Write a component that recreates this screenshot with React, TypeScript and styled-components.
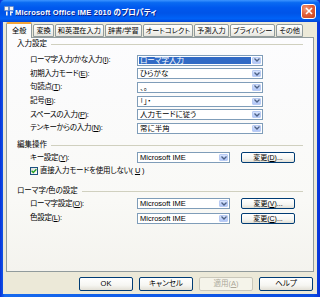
import React from 'react';
import styled, { createGlobalStyle } from 'styled-components';

const GlobalStyle = createGlobalStyle`
    html, body {
        margin: 0;
        padding: 0;
        width: 320px;
        height: 297px;
        overflow: hidden;
        background: #ffffff;
    }
    * {
        box-sizing: border-box;
    }
`;

const FONT = `"Liberation Sans", "Noto Sans CJK JP", sans-serif`;

const TABS = ['全般', '変換', '和英混在入力', '辞書/学習', 'オートコレクト', '予測入力', 'プライバシー', 'その他'];

interface InputRow {
    label: string;
    key: string;
    value: string;
    selected?: boolean;
}

const INPUT_ROWS: InputRow[] = [
    { label: 'ローマ字入力/かな入力', key: 'I', value: 'ローマ字入力', selected: true },
    { label: '初期入力モード', key: 'E', value: 'ひらがな' },
    { label: '句読点', key: 'T', value: '、。' },
    { label: '記号', key: 'B', value: '「」・' },
    { label: 'スペースの入力', key: 'P', value: '入力モードに従う' },
    { label: 'テンキーからの入力', key: 'N', value: '常に半角' },
];

const Mnemonic: React.FC<{ label: string; k: string; colon?: boolean }> = ({ label, k, colon = true }) => (
    <>
        {label}(<u>{k}</u>){colon ? ':' : ''}
    </>
);

const Chevron = () => (
    <svg width="6" height="4" viewBox="0 0 6 4">
        <path d="M0.5 0.5 L3 3 L5.5 0.5" fill="none" stroke="#4D6185" strokeWidth="1.3" />
    </svg>
);

const ComboBox: React.FC<{ width: number; value: string; selected?: boolean }> = ({ width, value, selected }) => (
    <Combo $w={width}>
        <ComboText $selected={selected}>{value}</ComboText>
        <DropButton>
            <Chevron />
        </DropButton>
    </Combo>
);

const App: React.FC = () => {
    return (
        <>
            <GlobalStyle />
            <Window>
                <TitleBar>
                    <AppIcon>
                        <svg width="10" height="10" viewBox="0 0 10 10">
                            <rect x="0.5" y="0.5" width="4" height="4" fill="#f4f4f4" stroke="#5d7fb8" strokeWidth="0.6" />
                            <rect x="5.5" y="0.5" width="4" height="4" fill="#f4f4f4" stroke="#5d7fb8" strokeWidth="0.6" />
                            <rect x="2" y="5.5" width="1.6" height="4" fill="#f4f4f4" />
                            <rect x="6" y="5.5" width="3" height="1.4" fill="#f4f4f4" />
                            <rect x="6" y="5.5" width="1.4" height="4" fill="#f4f4f4" />
                        </svg>
                    </AppIcon>
                    <TitleText>Microsoft Office IME 2010 のプロパティ</TitleText>
                    <CloseButton>
                        <svg width="8" height="8" viewBox="0 0 8 8">
                            <path d="M1 1 L7 7 M7 1 L1 7" stroke="#ffffff" strokeWidth="1.6" />
                        </svg>
                    </CloseButton>
                </TitleBar>
                <Body>
                    <TabStrip>
                        {TABS.map((tab, i) => (
                            <TabItem key={tab} $active={i === 0}>
                                {tab}
                            </TabItem>
                        ))}
                    </TabStrip>
                    <Panel>
                        <Section $top={1}>
                            <SectionHeader>
                                <span>入力設定</span>
                                <HeaderLine />
                            </SectionHeader>
                            <Rows $top={4.5}>
                                {INPUT_ROWS.map((row) => (
                                    <Row key={row.key}>
                                        <Label>
                                            <Mnemonic label={row.label} k={row.key} />
                                        </Label>
                                        <ComboBox width={126} value={row.value} selected={row.selected} />
                                    </Row>
                                ))}
                            </Rows>
                        </Section>

                        <Section $top={5}>
                            <SectionHeader>
                                <span>編集操作</span>
                                <HeaderLine />
                            </SectionHeader>
                            <Rows $top={1}>
                                <Row>
                                    <Label>
                                        <Mnemonic label="キー設定" k="Y" />
                                    </Label>
                                    <ComboBox width={93} value="Microsoft IME" />
                                    <SmallButton>
                                        <Mnemonic label="変更" k="D" colon={false} />...
                                    </SmallButton>
                                </Row>
                                <Row>
                                    <CheckLabel>
                                        <CheckBox>
                                            <svg width="6" height="6" viewBox="0 0 6 6">
                                                <path d="M0.6 2.8 L2.3 4.5 L5.4 1.2" fill="none" stroke="#21A121" strokeWidth="1.3" />
                                            </svg>
                                        </CheckBox>
                                        <Mnemonic label="直接入力モードを使用しない" k="U" colon={false} />
                                    </CheckLabel>
                                </Row>
                            </Rows>
                        </Section>

                        <Section $top={8}>
                            <SectionHeader>
                                <span>ローマ字/色の設定</span>
                                <HeaderLine />
                            </SectionHeader>
                            <Rows $top={0}>
                                <Row $h={14.8}>
                                    <Label>
                                        <Mnemonic label="ローマ字設定" k="O" />
                                    </Label>
                                    <ComboBox width={93} value="Microsoft IME" />
                                    <SmallButton>
                                        <Mnemonic label="変更" k="V" colon={false} />...
                                    </SmallButton>
                                </Row>
                                <Row $h={14.8}>
                                    <Label>
                                        <Mnemonic label="色設定" k="L" />
                                    </Label>
                                    <ComboBox width={93} value="Microsoft IME" />
                                    <SmallButton>
                                        <Mnemonic label="変更" k="C" colon={false} />...
                                    </SmallButton>
                                </Row>
                            </Rows>
                        </Section>
                    </Panel>
                    <Footer>
                        <DialogButton>OK</DialogButton>
                        <DialogButton>キャンセル</DialogButton>
                        <DialogButton disabled>
                            <Mnemonic label="適用" k="A" colon={false} />
                        </DialogButton>
                        <DialogButton>ヘルプ</DialogButton>
                    </Footer>
                </Body>
            </Window>
        </>
    );
};

export default App;

const Window = styled.div`
    width: 320px;
    height: 297px;
    display: flex;
    flex-direction: column;
    background: linear-gradient(90deg, #0831d9 0%, #166aee 1.5%, #0a4be0 98%, #0831d9 100%);
    padding: 0 3px 3px 3px;
    font-family: ${FONT};
    font-feature-settings: 'palt';
`;

const TitleBar = styled.div`
    height: 22px;
    margin: 0 -3px;
    padding: 0 4px 0 4px;
    display: flex;
    align-items: center;
    border-radius: 5px 5px 0 0;
    background: linear-gradient(
        180deg,
        #3d95ff 0%,
        #0a6af2 12%,
        #0058ee 35%,
        #0054e8 60%,
        #0062f7 85%,
        #0345d6 100%
    );
`;

const AppIcon = styled.div`
    width: 10px;
    height: 10px;
    margin-right: 1px;
    display: flex;
`;

const TitleText = styled.div`
    flex: 1;
    color: #ffffff;
    font-weight: 700;
    font-size: 7.5px;
    letter-spacing: 0.2px;
    text-shadow: 1px 1px 0 #0a1e8c;
    white-space: nowrap;
`;

const CloseButton = styled.div`
    width: 15px;
    height: 15px;
    border: 1px solid #ffffff;
    border-radius: 3px;
    background: radial-gradient(circle at 30% 30%, #f39a7a 0%, #e2613a 45%, #c4401a 100%);
    display: flex;
    align-items: center;
    justify-content: center;
`;

const Body = styled.div`
    flex: 1;
    background: #ece9d8;
    display: flex;
    flex-direction: column;
    padding: 1px 3px 0 3px;
`;

const TabStrip = styled.div`
    height: 15px;
    display: flex;
    align-items: flex-end;
    gap: 1px;
    position: relative;
    z-index: 1;
    margin-bottom: -1px;
`;

const TabItem = styled.div<{ $active?: boolean }>`
    height: ${(p) => (p.$active ? 16 : 13)}px;
    margin-bottom: ${(p) => (p.$active ? 0 : 1)}px;
    padding: 0 ${(p) => (p.$active ? 5 : 2)}px;
    border: 1px solid #919b9c;
    border-bottom: ${(p) => (p.$active ? 'none' : '1px solid #919b9c')};
    border-top: ${(p) => (p.$active ? '2px solid #f2a43a' : '1px solid #919b9c')};
    border-radius: 2px 2px 0 0;
    background: ${(p) => (p.$active ? '#fcfcfe' : 'linear-gradient(180deg, #ffffff 0%, #f3f3ef 60%, #e6e5de 100%)')};
    font-size: 7.2px;
    line-height: 10px;
    color: #000000;
    display: flex;
    align-items: center;
    justify-content: center;
    white-space: nowrap;
    flex-shrink: 0;
`;

const Panel = styled.div`
    height: 235px;
    border: 1px solid #919b9c;
    background: linear-gradient(180deg, #fcfcfe 0%, #f9f9f6 70%, #f4f3ee 100%);
    padding: 0 10px 0 10px;
    display: flex;
    flex-direction: column;
`;

const Section = styled.div<{ $top: number }>`
    margin-top: ${(p) => p.$top}px;
    display: flex;
    flex-direction: column;
`;

const SectionHeader = styled.div`
    height: 10px;
    display: flex;
    align-items: center;
    gap: 4px;
    font-size: 7.5px;
    line-height: 10px;
    color: #000000;
    white-space: nowrap;
`;

const HeaderLine = styled.div`
    flex: 1;
    height: 1px;
    background: #d0d0bf;
`;

const Rows = styled.div<{ $top: number }>`
    margin-top: ${(p) => p.$top}px;
    padding-left: 13px;
    display: flex;
    flex-direction: column;
`;

const Row = styled.div<{ $h?: number }>`
    height: ${(p) => p.$h ?? 13.6}px;
    display: flex;
    align-items: center;
`;

const Label = styled.div`
    width: 107px;
    font-size: 7.5px;
    line-height: 10px;
    letter-spacing: -0.3px;
    color: #000000;
    white-space: nowrap;
`;

const Combo = styled.div<{ $w: number }>`
    width: ${(p) => p.$w}px;
    height: 11px;
    border: 1px solid #7f9db9;
    background: #ffffff;
    padding: 1px;
    display: flex;
    gap: 1px;
`;

const ComboText = styled.div<{ $selected?: boolean }>`
    flex: 1;
    background: ${(p) => (p.$selected ? '#316ac5' : 'transparent')};
    color: ${(p) => (p.$selected ? '#ffffff' : '#000000')};
    font-size: 7.5px;
    line-height: 7px;
    padding-left: 1px;
    white-space: nowrap;
    overflow: hidden;
`;

const DropButton = styled.div`
    width: 9px;
    border: 1px solid #b9cbf3;
    border-radius: 1px;
    background: linear-gradient(180deg, #d8e4fd 0%, #c1d3fb 50%, #b1c6f6 100%);
    display: flex;
    align-items: center;
    justify-content: center;
`;

const SmallButton = styled.div`
    width: 54px;
    height: 11px;
    margin-left: 11px;
    border: 1px solid #003c74;
    border-radius: 2px;
    background: linear-gradient(180deg, #ffffff 0%, #f6f6f2 60%, #e3e0d6 100%);
    font-size: 7px;
    line-height: 9px;
    color: #000000;
    display: flex;
    align-items: center;
    justify-content: center;
    white-space: nowrap;
`;

const CheckLabel = styled.div`
    display: flex;
    align-items: center;
    gap: 2px;
    font-size: 7.5px;
    line-height: 10px;
    letter-spacing: -0.2px;
    color: #000000;
    white-space: nowrap;
`;

const CheckBox = styled.div`
    width: 8px;
    height: 8px;
    border: 1px solid #1c5180;
    background: linear-gradient(135deg, #dcdcd7 0%, #ffffff 100%);
    display: flex;
    align-items: center;
    justify-content: center;
`;

const Footer = styled.div`
    flex: 1;
    display: flex;
    align-items: center;
    justify-content: flex-end;
    gap: 6px;
    padding: 1px 1px 0 0;
`;

const DialogButton = styled.div<{ disabled?: boolean }>`
    width: 54px;
    height: 14px;
    border: 1px solid ${(p) => (p.disabled ? '#c9c7ba' : '#003c74')};
    border-radius: 2px;
    background: ${(p) => (p.disabled ? '#f5f4ea' : 'linear-gradient(180deg, #ffffff 0%, #f6f6f2 60%, #e3e0d6 100%)')};
    color: ${(p) => (p.disabled ? '#aca899' : '#000000')};
    font-size: 7.5px;
    line-height: 10px;
    display: flex;
    align-items: center;
    justify-content: center;
    white-space: nowrap;
`;
